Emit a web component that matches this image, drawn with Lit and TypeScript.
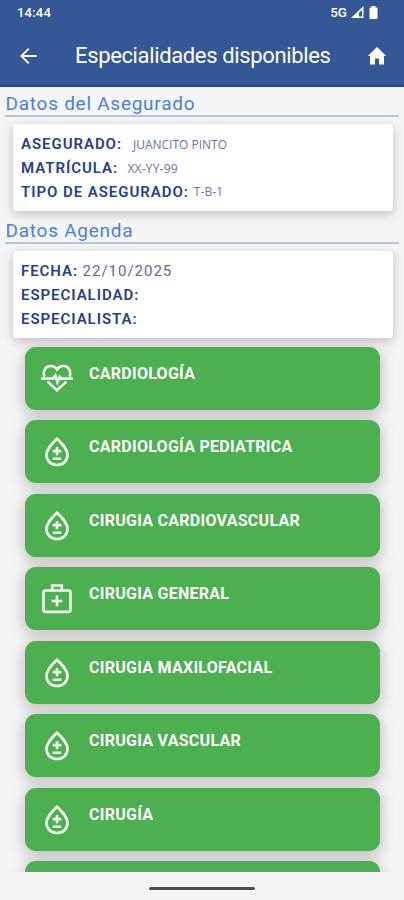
import { LitElement, html, svg, css } from "lit";
import { customElement, property } from "lit/decorators.js";

type IconName = "heart" | "drop" | "kit";

const ICONS = {
  heart: svg`
    <path d="M2.5 10.9C1.9 8.8 2 6.9 2.8 5.5C3.8 3.6 5.6 2.9 7.4 3C9.3 3.1 11 4 12 5.5C13 4 14.7 3.1 16.6 3C18.4 2.9 20.2 3.6 21.2 5.5C22 6.9 22.1 8.8 21.5 10.9" />
    <path d="M.2 12.5H9L10.8 10.2L12.3 15.1L14 11.2L15 12.5H23.8" />
    <path d="M4.9 14.7L12 21.2L19.1 14.7" />`,
  drop: svg`
    <path d="M12 2.8C7.7 6.9 4.1 10.6 4.1 15C4.1 19.4 7.6 22.5 12 22.5S19.9 19.4 19.9 15C19.9 10.6 16.3 6.9 12 2.8Z" />
    <path d="M12 9V15.2M8.8 12.1H15.2M8.8 17.8H15.2" />`,
  kit: svg`
    <rect x="1.9" y="6.4" width="20.2" height="16" rx="1.4" />
    <path d="M8.4 6.4V2.6H15.6V6.4M12 10.2V18.2M8 14.2H16" />`,
};

@customElement("specialty-button")
class SpecialtyButton extends LitElement {
  @property() label = "";
  @property() icon: IconName = "drop";

  static styles = css`
    :host {
      display: flex;
      align-items: flex-start;
      box-sizing: border-box;
      height: 63.3px;
      flex: none;
      padding: 15px 16px 0;
      gap: 16px;
      border-radius: 11px;
      background: #4caf50;
      color: #fff;
      box-shadow: 0 4px 14px 3px rgba(0, 0, 0, 0.18);
    }
    svg {
      width: 32px;
      height: 32px;
      fill: none;
      stroke: #f4fff2;
      stroke-width: 1.95;
      overflow: visible;
    }
    .label {
      font: 700 16px/20px Roboto, sans-serif;
      letter-spacing: 0.27px;
      margin-top: 2px;
      white-space: nowrap;
    }
  `;

  render() {
    return html`<svg viewBox="0 0 24 24">${ICONS[this.icon]}</svg><span class="label">${this.label}</span>`;
  }
}

const SPECIALTIES: [string, IconName][] = [
  ["CARDIOLOGÍA", "heart"],
  ["CARDIOLOGÍA PEDIATRICA", "drop"],
  ["CIRUGIA CARDIOVASCULAR", "drop"],
  ["CIRUGIA GENERAL", "kit"],
  ["CIRUGIA MAXILOFACIAL", "drop"],
  ["CIRUGIA VASCULAR", "drop"],
  ["CIRUGÍA", "drop"],
  ["", "drop"],
];

@customElement("app-root")
class AppRoot extends LitElement {
  static styles = css`
    :host {
      display: flex;
      flex-direction: column;
      height: 900px;
      overflow: hidden;
      background: #f5f5f5;
      font-family: Roboto, sans-serif;
    }
    header {
      height: 87px;
      flex: none;
      box-sizing: border-box;
      background: #345795;
      border-bottom: 2px solid #1f4686;
      color: #fff;
    }
    .status {
      display: flex;
      align-items: center;
      height: 24px;
      padding: 0 26px 0 17px;
      font-size: 13px;
      font-weight: 500;
    }
    .clock { flex: 1; letter-spacing: 0.2px; }
    .network { font-size: 13.5px; }
    .signal { width: 13px; height: 12px; margin-left: 4px; }
    .battery { width: 9px; height: 13px; margin-left: 5px; }
    .bar {
      display: flex;
      align-items: center;
      height: 63px;
      padding: 0 17px 0 19px;
    }
    .back { width: 20px; height: 20px; }
    h1 {
      flex: 1;
      margin: 0 0 0 36px;
      font-size: 22px;
      font-weight: 400;
      letter-spacing: -0.36px;
      white-space: nowrap;
    }
    .home { width: 20px; height: 20px; }
    h2 {
      box-sizing: border-box;
      flex: none;
      height: 25px;
      margin: 5px 5px 0;
      padding-left: 0.5px;
      border-bottom: 2px solid #b3c2e3;
      color: #4a80d9;
      font-size: 19px;
      line-height: 24px;
      font-weight: 400;
      letter-spacing: 0.74px;
      white-space: nowrap;
    }
    .second { margin-top: 8px; }
    .card {
      box-sizing: border-box;
      flex: none;
      height: 87px;
      margin: 7px 11px 0 12.5px;
      padding: 8.4px 8.5px;
      border-radius: 4px;
      background: #fff;
      box-shadow: 0 3px 10px 1px rgba(0, 0, 0, 0.19);
      color: #5c689c;
    }
    .row {
      display: flex;
      align-items: center;
      height: 23.8px;
      white-space: nowrap;
    }
    .key {
      color: #24408a;
      font-size: 15px;
      font-weight: 600;
      letter-spacing: 0.95px;
    }
    .value {
      font: 400 12px "Open Sans", sans-serif;
      color: #6c729e;
    }
    .name { margin-left: 11px; }
    .code { margin-left: 5px; letter-spacing: 0.1px; }
    .plate { margin-left: 9.5px; letter-spacing: 0.2px; }
    .date {
      margin-left: 4.5px;
      font-size: 15px;
      letter-spacing: 0.98px;
    }
    .list {
      display: flex;
      flex-direction: column;
      gap: 10.2px;
      height: 535.5px;
      flex: none;
      box-sizing: border-box;
      margin-top: -2px;
      padding: 10.6px 24px 0 25px;
      overflow: hidden;
    }
    .nav {
      flex: 1;
      display: flex;
      justify-content: center;
      padding-top: 15.5px;
    }
    .pill {
      width: 106px;
      height: 3px;
      border-radius: 2px;
      background: #505050;
    }
  `;

  render() {
    return html`
      <header>
        <div class="status">
          <span class="clock">14:44</span><span class="network">5G</span>
          <svg class="signal" viewBox="0 0 13 12"><path d="M12.5 0V12H0Z" fill="#fff" /><path d="M11 4V10.5H8V6.7Z" fill="#345795" /></svg>
          <svg class="battery" viewBox="0 0 9 13"><path d="M2.5 0H6.5V1.5H7.5Q8.5 1.5 8.5 2.5V12Q8.5 13 7.5 13H1.5Q.5 13 .5 12V2.5Q.5 1.5 1.5 1.5H2.5Z" fill="#fff" /></svg>
        </div>
        <div class="bar">
          <svg class="back" viewBox="0 0 20 20" fill="none" stroke="#fff" stroke-width="1.8"><path d="M17.5 10H3M9.7 2.7L2.4 10L9.7 17.3" /></svg>
          <h1>Especialidades disponibles</h1>
          <svg class="home" viewBox="0 0 20 20"><path d="M10 1L19.2 10H17V18.5H12V12.5H8V18.5H3V10H.8Z" fill="#fff" /></svg>
        </div>
      </header>
      <h2>Datos del Asegurado</h2>
      <div class="card">
        <div class="row"><span class="key">ASEGURADO:</span><span class="value name">JUANCITO PINTO</span></div>
        <div class="row"><span class="key">MATRÍCULA:</span><span class="value plate">XX-YY-99</span></div>
        <div class="row"><span class="key">TIPO DE ASEGURADO:</span><span class="value code">T-B-1</span></div>
      </div>
      <h2 class="second">Datos Agenda</h2>
      <div class="card">
        <div class="row"><span class="key">FECHA:</span><span class="date">22/10/2025</span></div>
        <div class="row"><span class="key">ESPECIALIDAD:</span></div>
        <div class="row"><span class="key">ESPECIALISTA:</span></div>
      </div>
      <div class="list">
        ${SPECIALTIES.map(([label, icon]) => html`<specialty-button .label=${label} .icon=${icon}></specialty-button>`)}
      </div>
      <div class="nav"><div class="pill"></div></div>
    `;
  }
}
